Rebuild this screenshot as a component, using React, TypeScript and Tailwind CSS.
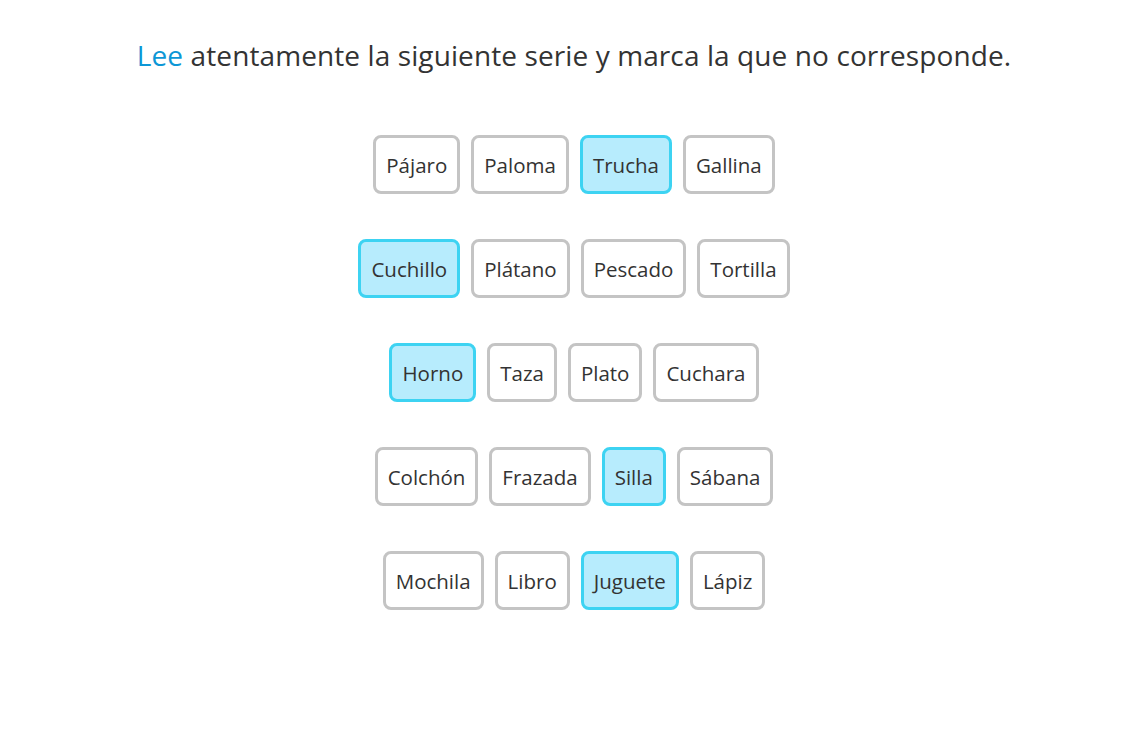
import React from 'react';

const rows: { words: string[]; selected: string }[] = [
  { words: ['Pájaro', 'Paloma', 'Trucha', 'Gallina'], selected: 'Trucha' },
  { words: ['Cuchillo', 'Plátano', 'Pescado', 'Tortilla'], selected: 'Cuchillo' },
  { words: ['Horno', 'Taza', 'Plato', 'Cuchara'], selected: 'Horno' },
  { words: ['Colchón', 'Frazada', 'Silla', 'Sábana'], selected: 'Silla' },
  { words: ['Mochila', 'Libro', 'Juguete', 'Lápiz'], selected: 'Juguete' },
];

const App: React.FC = () => {
  return (
    <div
      className="min-h-screen bg-white pl-[11px] pt-[35px] text-[#333333]"
      style={{ fontFamily: '"Open Sans", "Noto Sans", sans-serif' }}
    >
      <h1 className="text-center text-[28px] leading-[40px] font-normal tracking-[0.1px]">
        <span className="text-[#0d97d6]">Lee</span> atentamente la siguiente serie y marca la que no corresponde.
      </h1>

      <div className="mt-[60px] flex flex-col items-center gap-[45px]">
        {rows.map((row, i) => (
          <div key={i} className="flex gap-[11px]">
            {row.words.map((w) => {
              const active = w === row.selected;
              return (
                <button
                  key={w}
                  className={
                    active
                      ? 'h-[59px] rounded-[8px] border-[3px] border-[#3dd3f2] bg-[#b7ecfd] px-[10px] pt-[2px] text-[20.5px] text-[#333333]'
                      : 'h-[59px] rounded-[8px] border-[3px] border-[#c4c4c4] bg-white px-[10px] pt-[2px] text-[20.5px] text-[#333333]'
                  }
                >
                  {w}
                </button>
              );
            })}
          </div>
        ))}
      </div>
    </div>
  );
};

export default App;
